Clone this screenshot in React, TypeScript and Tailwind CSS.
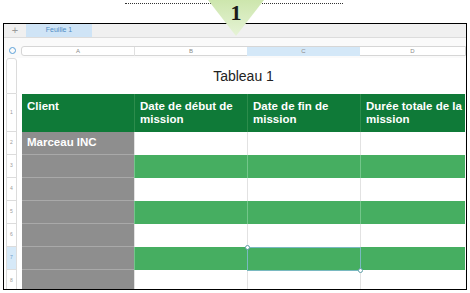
import React from 'react';

type Row = { n: number; green: boolean; client?: string };

const rows: Row[] = [
  { n: 2, green: false, client: 'Marceau INC' },
  { n: 3, green: true },
  { n: 4, green: false },
  { n: 5, green: true },
  { n: 6, green: false },
  { n: 7, green: true },
  { n: 8, green: false },
];

const headers = ['Client', 'Date de début de mission', 'Date de fin de mission', 'Durée totale de la mission'];

function HeaderCell({ text, first }: { text: string; first?: boolean }) {
  return (
    <div
      className={
        'h-full pl-[5px] pr-[2px] pt-[6px] text-[11.5px] leading-[13px] font-bold text-white ' +
        (first ? '' : 'border-l border-[#2c8c4c]')
      }
    >
      {text}
    </div>
  );
}

function BodyRow({ row }: { row: Row }) {
  const fill = row.green ? 'bg-[#46ae61]' : 'bg-white';
  const line = row.green ? 'border-[#74c68b]' : 'border-[#e2e2e2]';
  return (
    <div className="grid grid-cols-[112px_113px_113px_105px] h-[23px]">
      <div className="bg-[#8e8e8e] border-b border-[#a9a9a9] flex items-center pl-[5px] text-[11.5px] font-bold text-white">
        {row.client}
      </div>
      <div className={fill + ' border-l ' + line} />
      <div className={'relative border-l ' + fill + ' ' + line}>
        {row.n === 7 && (
          <div className="absolute z-10 -left-px top-0 w-[114px] h-[24px] border border-[#79b9c0]">
            <span className="absolute -left-[3px] -top-[3px] w-[5px] h-[5px] rounded-full bg-white border border-[#5f9fa8]" />
            <span className="absolute -right-[3px] -bottom-[3px] w-[5px] h-[5px] rounded-full bg-white border border-[#5f9fa8]" />
          </div>
        )}
      </div>
      <div className={fill + ' border-l ' + line} />
    </div>
  );
}

export default function App() {
  return (
    <div className="relative w-[470px] h-[293px] bg-white overflow-hidden font-['Liberation_Sans',Arial,sans-serif]">
      <div className="absolute left-[125px] top-[3px] w-[218px] border-t border-dotted border-[#333]" />

      <div className="pl-[3px] pt-[23px]">
        <div className="w-[464px] h-[267px] border border-black overflow-hidden flex flex-col">
          {/* sheet tabs */}
          <div className="h-[14px] shrink-0 flex bg-[#f0f0f0] border-b border-[#dcdcdc]">
            <div className="w-[22px] flex items-center justify-center text-[11px] leading-none text-[#9a9a9a]">+</div>
            <div className="w-[66px] flex items-center justify-center bg-[#cfe4f6] text-[7px] text-[#4f8cc4]">
              Feuille 1
            </div>
          </div>

          {/* column letters */}
          <div className="h-[20px] shrink-0 flex bg-[#fafafa]">
            <div className="w-[18px] flex items-center justify-center pt-[4px]">
              <div className="w-[7px] h-[7px] rounded-full border border-[#5aa0d8]" />
            </div>
            <div className="mt-[8px] h-[10px] flex-1 grid grid-cols-[112px_113px_113px_105px] border border-[#d6d6d6] rounded-l-[3px] bg-white text-[6px] text-[#8a8a8a]">
              <div className="flex items-center justify-center">A</div>
              <div className="flex items-center justify-center border-l border-[#e0e0e0]">B</div>
              <div className="flex items-center justify-center bg-[#d4e8f8]">C</div>
              <div className="flex items-center justify-center">D</div>
            </div>
          </div>

          <div className="flex flex-1">
            {/* row numbers */}
            <div className="w-[18px] shrink-0 pl-[2px]">
              <div className="w-[11px] flex flex-col text-[5px] text-[#9a9a9a]">
                <div className="h-[36px] border border-[#dcdcdc] rounded-t-[3px]" />
                <div className="h-[38px] border-x border-b border-[#dcdcdc] flex items-center justify-center">1</div>
                {rows.map(r => (
                  <div
                    key={r.n}
                    className={
                      'h-[23px] border-x border-b border-[#dcdcdc] flex items-center justify-center ' +
                      (r.n === 7 ? 'bg-[#d6e9f8] text-[#6a9ccc]' : '')
                    }
                  >
                    {r.n}
                  </div>
                ))}
              </div>
            </div>

            {/* table */}
            <div className="w-[443px] flex flex-col">
              <div className="h-[36px] flex items-center justify-center text-[14px] text-[#222] pt-[1px]">
                Tableau 1
              </div>
              <div className="h-[38px] grid grid-cols-[112px_113px_113px_105px] bg-[#0f7a38]">
                {headers.map((h, i) => (
                  <HeaderCell key={h} text={h} first={i === 0} />
                ))}
              </div>
              {rows.map(r => (
                <BodyRow key={r.n} row={r} />
              ))}
            </div>
          </div>
        </div>
      </div>

      <svg className="absolute left-[208px] top-0" width="56" height="36" viewBox="0 0 56 36">
        <defs>
          <linearGradient id="tri" x1="0" y1="0" x2="0" y2="1">
            <stop offset="0" stopColor="#cde6ad" />
            <stop offset="1" stopColor="#e6f3d6" />
          </linearGradient>
        </defs>
        <polygon points="0,0 56,0 28,36" fill="url(#tri)" />
      </svg>
      <div className="absolute left-[208px] top-[2px] w-[56px] text-center text-[22px] leading-none font-bold text-[#1a1a1a] font-['Liberation_Serif',serif]">
        1
      </div>
    </div>
  );
}
